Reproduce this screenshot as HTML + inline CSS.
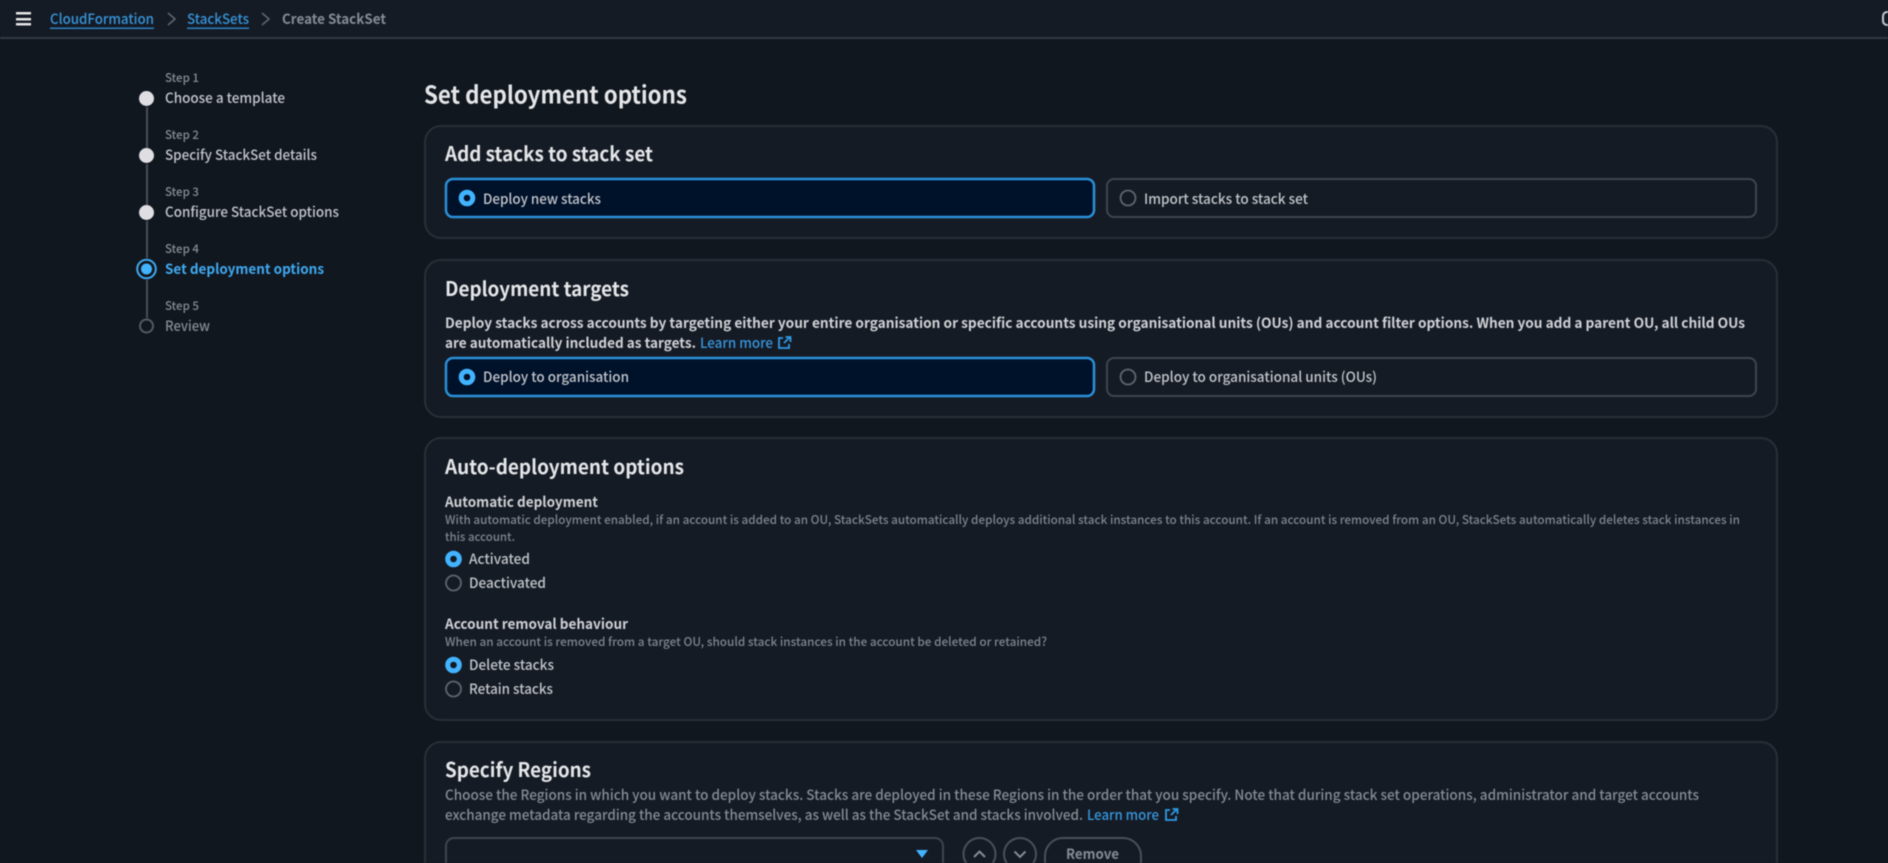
<!DOCTYPE html>
<html><head><meta charset="utf-8"><title>Create StackSet</title>
<style>
html,body{margin:0;padding:0;width:1888px;height:863px;overflow:hidden;background:#11171f}
svg{display:block;filter:blur(.5px)}
text{font-family:"Noto Sans CJK JP","Liberation Sans",sans-serif;font-size:14px;fill:#c3c6cb;font-weight:500}
.h{font-size:20px;font-weight:700;fill:#e4e6e8}
.b{font-weight:700;fill:#cfd1d5}
.s{font-size:12px;fill:#7f858e;font-weight:500}
.p{font-size:14px;fill:#868c95;font-weight:500}
.l{fill:#3796dc}
.st{font-size:12px;fill:#868c95;font-weight:500}
.card{fill:#151b25;stroke:#292f38;stroke-width:2}
.on{fill:#00112a;stroke:#2a90d8;stroke-width:2.5}
.off{fill:none;stroke:#3f444d;stroke-width:2}
.ro{fill:none;stroke:#5f646c;stroke-width:1.8}
.btn{fill:none;stroke:#4a4f58;stroke-width:2}
.ic{fill:none;stroke:#2f9ae6;stroke-width:1.8}
</style></head><body>
<svg width="1888" height="863" viewBox="0 0 1888 863" xmlns="http://www.w3.org/2000/svg">
<rect width="1888" height="863" fill="#11171f"/>
<rect width="1888" height="38" fill="#151b25"/>
<rect y="37" width="1888" height="2" fill="#343942"/>
<rect x="16" y="12" width="15" height="2.5" fill="#e4e5e6"/><rect x="16" y="18" width="15" height="2.5" fill="#e4e5e6"/><rect x="16" y="23" width="15" height="2.5" fill="#e4e5e6"/>
<text x="50" y="24" textLength="104" lengthAdjust="spacingAndGlyphs" class="l">CloudFormation</text>
<rect x="50" y="27.500" width="104" height="1.500" fill="#2b7fc0"/>
<path d="M168 13l7 6-7 6" fill="none" stroke="#5f646c" stroke-width="1.600"/>
<text x="187" y="24" textLength="62" lengthAdjust="spacingAndGlyphs" class="l">StackSets</text>
<rect x="187" y="27.500" width="62" height="1.500" fill="#2b7fc0"/>
<path d="M262 13l7 6-7 6" fill="none" stroke="#5f646c" stroke-width="1.600"/>
<text x="282" y="24" textLength="104" lengthAdjust="spacingAndGlyphs" style="fill:#868c95;font-weight:700">Create StackSet</text>
<rect x="1883" y="12" width="10" height="13" rx="4" fill="none" stroke="#c3c6cb" stroke-width="2"/>

<rect x="146" y="107" width="2" height="41" fill="#4a4f57"/><rect x="146" y="164" width="2" height="41" fill="#4a4f57"/><rect x="146" y="221" width="2" height="37" fill="#4a4f57"/><rect x="146" y="280" width="2" height="38" fill="#4a4f57"/>
<text x="165" y="82" textLength="34" lengthAdjust="spacingAndGlyphs" class="st">Step 1</text>
<text x="165" y="103" textLength="120" lengthAdjust="spacingAndGlyphs">Choose a template</text>
<circle cx="146.500" cy="98.500" r="7.500" fill="#dedee3"/>
<text x="165" y="139" textLength="34" lengthAdjust="spacingAndGlyphs" class="st">Step 2</text>
<text x="165" y="160" textLength="152" lengthAdjust="spacingAndGlyphs">Specify StackSet details</text>
<circle cx="146.500" cy="155.500" r="7.500" fill="#dedee3"/>
<text x="165" y="196" textLength="34" lengthAdjust="spacingAndGlyphs" class="st">Step 3</text>
<text x="165" y="217" textLength="174" lengthAdjust="spacingAndGlyphs">Configure StackSet options</text>
<circle cx="146.500" cy="212.500" r="7.500" fill="#dedee3"/>
<text x="165" y="253" textLength="34" lengthAdjust="spacingAndGlyphs" class="st">Step 4</text>
<text x="165" y="274" textLength="159" lengthAdjust="spacingAndGlyphs" style="fill:#3fa9f0;font-weight:700">Set deployment options</text>
<circle cx="146.500" cy="269" r="9.300" fill="none" stroke="#3fa9f0" stroke-width="2"/><circle cx="146.500" cy="269" r="5.500" fill="#42b4ff"/>
<text x="165" y="310" textLength="34" lengthAdjust="spacingAndGlyphs" class="st">Step 5</text>
<text x="165" y="331" textLength="45" lengthAdjust="spacingAndGlyphs" style="fill:#868c95">Review</text>
<circle cx="146.500" cy="326" r="6.500" fill="none" stroke="#555a63" stroke-width="2"/>

<text x="424" y="103.500" textLength="263" lengthAdjust="spacingAndGlyphs" style="font-size:24px;font-weight:700;fill:#e4e6e8">Set deployment options</text>

<rect x="425" y="126" width="1352" height="112" rx="16" class="card"/>
<text x="445" y="161" textLength="208" lengthAdjust="spacingAndGlyphs" class="h">Add stacks to stack set</text>
<rect x="446" y="179" width="648" height="38" rx="7" class="on"/>
<circle cx="467" cy="198" r="5.800" fill="none" stroke="#42b4ff" stroke-width="5"/>
<text x="483" y="204" textLength="118" lengthAdjust="spacingAndGlyphs">Deploy new stacks</text>
<rect x="1107" y="179" width="649" height="38" rx="7" class="off"/>
<circle cx="1128" cy="198" r="7.500" class="ro"/>
<text x="1144" y="204" textLength="164" lengthAdjust="spacingAndGlyphs">Import stacks to stack set</text>

<rect x="425" y="260" width="1352" height="157" rx="16" class="card"/>
<text x="445" y="296" textLength="184" lengthAdjust="spacingAndGlyphs" class="h">Deployment targets</text>
<text x="445" y="328" textLength="1300" lengthAdjust="spacingAndGlyphs" class="b">Deploy stacks across accounts by targeting either your entire organisation or specific accounts using organisational units (OUs) and account filter options. When you add a parent OU, all child OUs</text>
<text x="445" y="348" textLength="251" lengthAdjust="spacingAndGlyphs" class="b">are automatically included as targets.</text>
<text x="700" y="348" textLength="73" lengthAdjust="spacingAndGlyphs" class="l">Learn more</text>
<path d="M783 338h-4v10h10v-4M784 343l6-6M785.500 337h5v5" class="ic"/>
<rect x="446" y="358" width="648" height="38" rx="7" class="on"/>
<circle cx="467" cy="377" r="5.800" fill="none" stroke="#42b4ff" stroke-width="5"/>
<text x="483" y="382" textLength="146" lengthAdjust="spacingAndGlyphs">Deploy to organisation</text>
<rect x="1107" y="358" width="649" height="38" rx="7" class="off"/>
<circle cx="1128" cy="377" r="7.500" class="ro"/>
<text x="1144" y="382" textLength="233" lengthAdjust="spacingAndGlyphs">Deploy to organisational units (OUs)</text>

<rect x="425" y="438" width="1352" height="282" rx="16" class="card"/>
<text x="445" y="474" textLength="239" lengthAdjust="spacingAndGlyphs" class="h">Auto-deployment options</text>
<text x="445" y="507" textLength="153" lengthAdjust="spacingAndGlyphs" class="b">Automatic deployment</text>
<text x="445" y="524" textLength="1295" lengthAdjust="spacingAndGlyphs" class="s">With automatic deployment enabled, if an account is added to an OU, StackSets automatically deploys additional stack instances to this account. If an account is removed from an OU, StackSets automatically deletes stack instances in</text>
<text x="445" y="541" textLength="70" lengthAdjust="spacingAndGlyphs" class="s">this account.</text>
<circle cx="453.500" cy="559" r="5.800" fill="none" stroke="#42b4ff" stroke-width="5"/>
<text x="469" y="564" textLength="61" lengthAdjust="spacingAndGlyphs">Activated</text>
<circle cx="453.500" cy="583" r="7.500" class="ro"/>
<text x="469" y="588" textLength="77" lengthAdjust="spacingAndGlyphs">Deactivated</text>
<text x="445" y="629" textLength="183" lengthAdjust="spacingAndGlyphs" class="b">Account removal behaviour</text>
<text x="445" y="646" textLength="602" lengthAdjust="spacingAndGlyphs" class="s">When an account is removed from a target OU, should stack instances in the account be deleted or retained?</text>
<circle cx="453.500" cy="665" r="5.800" fill="none" stroke="#42b4ff" stroke-width="5"/>
<text x="469" y="670" textLength="85" lengthAdjust="spacingAndGlyphs">Delete stacks</text>
<circle cx="453.500" cy="689" r="7.500" class="ro"/>
<text x="469" y="694" textLength="84" lengthAdjust="spacingAndGlyphs">Retain stacks</text>

<rect x="425" y="742" width="1352" height="160" rx="16" class="card"/>
<text x="445" y="777" textLength="146" lengthAdjust="spacingAndGlyphs" class="h">Specify Regions</text>
<text x="445" y="800" textLength="1254" lengthAdjust="spacingAndGlyphs" class="p">Choose the Regions in which you want to deploy stacks. Stacks are deployed in these Regions in the order that you specify. Note that during stack set operations, administrator and target accounts</text>
<text x="445" y="820" textLength="638" lengthAdjust="spacingAndGlyphs" class="p">exchange metadata regarding the accounts themselves, as well as the StackSet and stacks involved.</text>
<text x="1087" y="820" textLength="72" lengthAdjust="spacingAndGlyphs" class="l">Learn more</text>
<path d="M1170 810h-4v10h10v-4M1171 815l6-6M1172.500 809h5v5" class="ic"/>
<rect x="446" y="838" width="497" height="40" rx="8" class="off"/>
<path d="M916 850h12l-6 8z" fill="#42b4ff"/>
<circle cx="979.500" cy="854" r="16" class="btn"/>
<path d="M974 857l5.500-5.500 5.500 5.500" fill="none" stroke="#868c95" stroke-width="2"/>
<circle cx="1020" cy="854" r="16" class="btn"/>
<path d="M1014.500 851.500l5.500 5.500 5.500-5.500" fill="none" stroke="#868c95" stroke-width="2"/>
<rect x="1045" y="838" width="96" height="40" rx="18" class="btn"/>
<text x="1066" y="859" textLength="53" lengthAdjust="spacingAndGlyphs" style="fill:#868c95;font-weight:700">Remove</text>
</svg>
</body></html>
